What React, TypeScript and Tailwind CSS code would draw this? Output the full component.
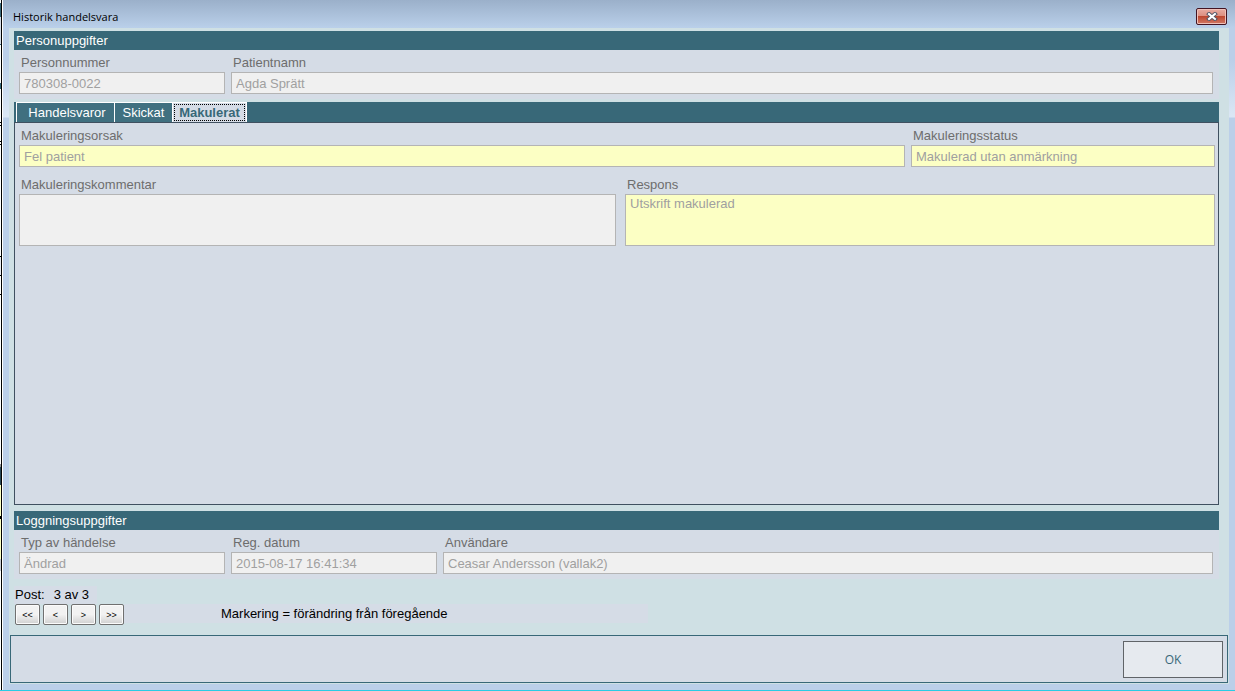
import type { ReactNode } from "react";

type FieldProps = {
  id: string;
  label: string;
  value: string;
  className?: string;
  changed?: boolean;
  multiline?: boolean;
};

const Field = ({ id, label, value, className = "", changed, multiline }: FieldProps) => {
  const box = `block w-full resize-none rounded-none border border-[#b4b4b4] px-1 text-[#a0a0a0] outline-none ${
    changed ? "bg-[#fcffc4]" : "bg-[#f0f0f0]"
  }`;

  return (
    <div className={className}>
      <label htmlFor={id} className="block h-5 pl-0.5 leading-[22px] text-[#6d6d6d]">
        {label}
      </label>
      {multiline ? (
        <textarea id={id} readOnly defaultValue={value} className={`${box} h-[52px] leading-[18px]`} />
      ) : (
        <input id={id} type="text" readOnly defaultValue={value} className={`${box} h-[22px]`} />
      )}
    </div>
  );
};

const Section = ({ title, children }: { title: string; children: ReactNode }) => (
  <section className="bg-[#d5dce6]">
    <h2 className="h-[19px] bg-[#386878] pl-0.5 leading-[19px] text-white">{title}</h2>
    <div className="flex gap-1.5 pt-0.5 pr-1.5 pb-[5px] pl-[5px]">{children}</div>
  </section>
);

const tabs = [
  { name: "Handelsvaror", className: "w-[98px] bg-[#407080] pl-1 text-white" },
  { name: "Skickat", className: "w-[58px] bg-[#407080] text-white" },
  { name: "Makulerat", className: "w-[75px] border-r bg-[#d5dce6] font-bold text-[#386878]", active: true },
];

const steps = [
  { sign: "<<", label: "Första posten" },
  { sign: "<", label: "Föregående post" },
  { sign: ">", label: "Nästa post" },
  { sign: ">>", label: "Sista posten" },
];

// What shows of the window behind the dialog, top to bottom
const sliver = [
  "h-[3px] bg-white",
  "h-3.5 bg-[#386878]",
  "h-[27px] bg-[#d5dce6]",
  "h-px bg-[#386878]",
  "h-[38px] bg-white",
  "h-1.5 bg-[#386878]",
  "h-[33px] bg-white",
  "h-px bg-black",
  "h-0.5 bg-white",
  "h-px bg-black",
  "h-[15px] bg-white",
  "h-px bg-black",
  "h-0.5 bg-white",
  "h-px bg-black",
  "h-[111px] bg-white",
  "h-px bg-black",
  "h-[18px] bg-[#e8ebf2]",
  "h-px bg-black",
  "h-[18px] bg-white",
  "h-px bg-black",
  "h-[169px] bg-white",
  "h-[3px] bg-[#909090]",
  "h-[18px] bg-[#284858]",
  "h-[31px] bg-[#fcffc4]",
  "h-[3px] bg-black",
  "h-10 bg-[#fcffc4]",
  "h-3 bg-[#c8ccd4]",
];

const App = () => {
  return (
    <div className="flex min-h-screen border-b border-[#29cce4] bg-white font-['Liberation_Sans',Arial,sans-serif] text-[13px]">
      <div className="w-0.5 border-r border-black">
        {sliver.map((piece, i) => (
          <div key={i} className={piece} />
        ))}
      </div>

      <main className="ml-px flex flex-1 flex-col bg-[#bbcfe9] bg-[linear-gradient(to_bottom,#bbcfe9_28px,#bbcfe9_60px,#dbe7f5_117px,#bbcfe9_118px)] pr-1.5 pb-1.5 pl-1.5">
        <header className="-mx-1.5 flex h-7 items-start justify-between bg-linear-to-b from-[#9bb0ca] to-[#bad0ea] pt-2 pr-2 pl-2.5">
          <h1 className="font-['Open_Sans',sans-serif] text-[11px] leading-[18px]">Historik handelsvara</h1>
          <button
            aria-label="Stäng"
            className="flex h-[17px] w-[31px] items-center justify-center rounded-[2px] border border-[#431422] bg-[linear-gradient(to_bottom,#e8aca2,#dc8f80_45%,#bb432b_46%,#d17a66)] shadow-[inset_0_0_0_1px_#efc0b8]"
          >
            <svg width="12" height="9" viewBox="0 0 12 9">
              <path d="M3 2l6 5M9 2l-6 5" stroke="#535666" strokeWidth="4" strokeLinecap="square" />
              <path d="M3 2l6 5M9 2l-6 5" stroke="#fff" strokeWidth="2" strokeLinecap="square" />
            </svg>
          </button>
        </header>

        <div className="flex flex-1 flex-col bg-[#cfe0e4] pt-[3px]">
          <div className="flex flex-1 flex-col pr-2.5 pl-[5px]">
            <Section title="Personuppgifter">
              <Field id="personnummer" label="Personnummer" value="780308-0022" className="w-[206px]" />
              <Field id="patientnamn" label="Patientnamn" value="Agda Sprätt" className="flex-1" />
            </Section>

            <div role="tablist" className="mt-[3px] flex h-[21px] border-b border-[#405060] bg-[#386878] pl-0.5">
              {tabs.map((tab) => (
                <button
                  key={tab.name}
                  role="tab"
                  aria-selected={!!tab.active}
                  className={`h-5 border-t border-l border-white p-px ${tab.className}`}
                >
                  <span
                    className={`block ${tab.active ? "border border-dotted border-black leading-[15px]" : "pt-px leading-4"}`}
                  >
                    {tab.name}
                  </span>
                </button>
              ))}
            </div>
            <div role="tabpanel" className="flex-1 border border-t-0 border-[#405060] bg-[#d5dce6] pt-0.5 pr-[3px] pl-1">
              <div className="flex gap-1.5">
                <Field id="orsak" label="Makuleringsorsak" value="Fel patient" className="flex-1" changed />
                <Field
                  id="status"
                  label="Makuleringsstatus"
                  value="Makulerad utan anmärkning"
                  className="w-[304px]"
                  changed
                />
              </div>
              <div className="mt-[7px] flex gap-[9px]">
                <Field id="kommentar" label="Makuleringskommentar" value="" className="flex-1" multiline />
                <Field
                  id="respons"
                  label="Respons"
                  value="Utskrift makulerad"
                  className="w-[590px]"
                  changed
                  multiline
                />
              </div>
            </div>

            <div className="mt-1.5">
              <Section title="Loggningsuppgifter">
                <Field id="typ" label="Typ av händelse" value="Ändrad" className="w-[206px]" />
                <Field id="datum" label="Reg. datum" value="2015-08-17 16:41:34" className="w-[206px]" />
                <Field id="anvandare" label="Användare" value="Ceasar Andersson (vallak2)" className="flex-1" />
              </Section>
            </div>

            <p className="mt-[7px] flex h-[18px] w-[83px] gap-[9px] bg-[#d5dce6] pl-px leading-[18px]">
              <span>Post:</span>
              <span>3 av 3</span>
            </p>
            <div className="flex pb-2.5 pl-px">
              <div className="flex gap-[3px]">
                {steps.map((step) => (
                  <button
                    key={step.sign}
                    aria-label={step.label}
                    className="h-[21px] w-[25px] rounded-[2px] border border-[#707070] bg-linear-to-b from-[#f2f2f2] from-50% to-[#d0d0d0] text-[9px] leading-[18px] shadow-[inset_0_0_0_1px_#fbfbfb]"
                  >
                    {step.sign}
                  </button>
                ))}
              </div>
              <p className="h-[19px] w-[524px] bg-[#d5dce6] pl-[97px] leading-[19px]">
                Markering = förändring från föregående
              </p>
            </div>
          </div>

          <footer className="mx-px mb-px flex h-12 justify-end border border-[#386878] bg-[#d5dce6] p-[5px] pr-1">
            <button className="h-[37px] w-[100px] border border-[#606468] bg-[#e6eaef] font-['Open_Sans',sans-serif] text-xs text-[#386878]">
              OK
            </button>
          </footer>
        </div>
      </main>
    </div>
  );
};

export default App;
